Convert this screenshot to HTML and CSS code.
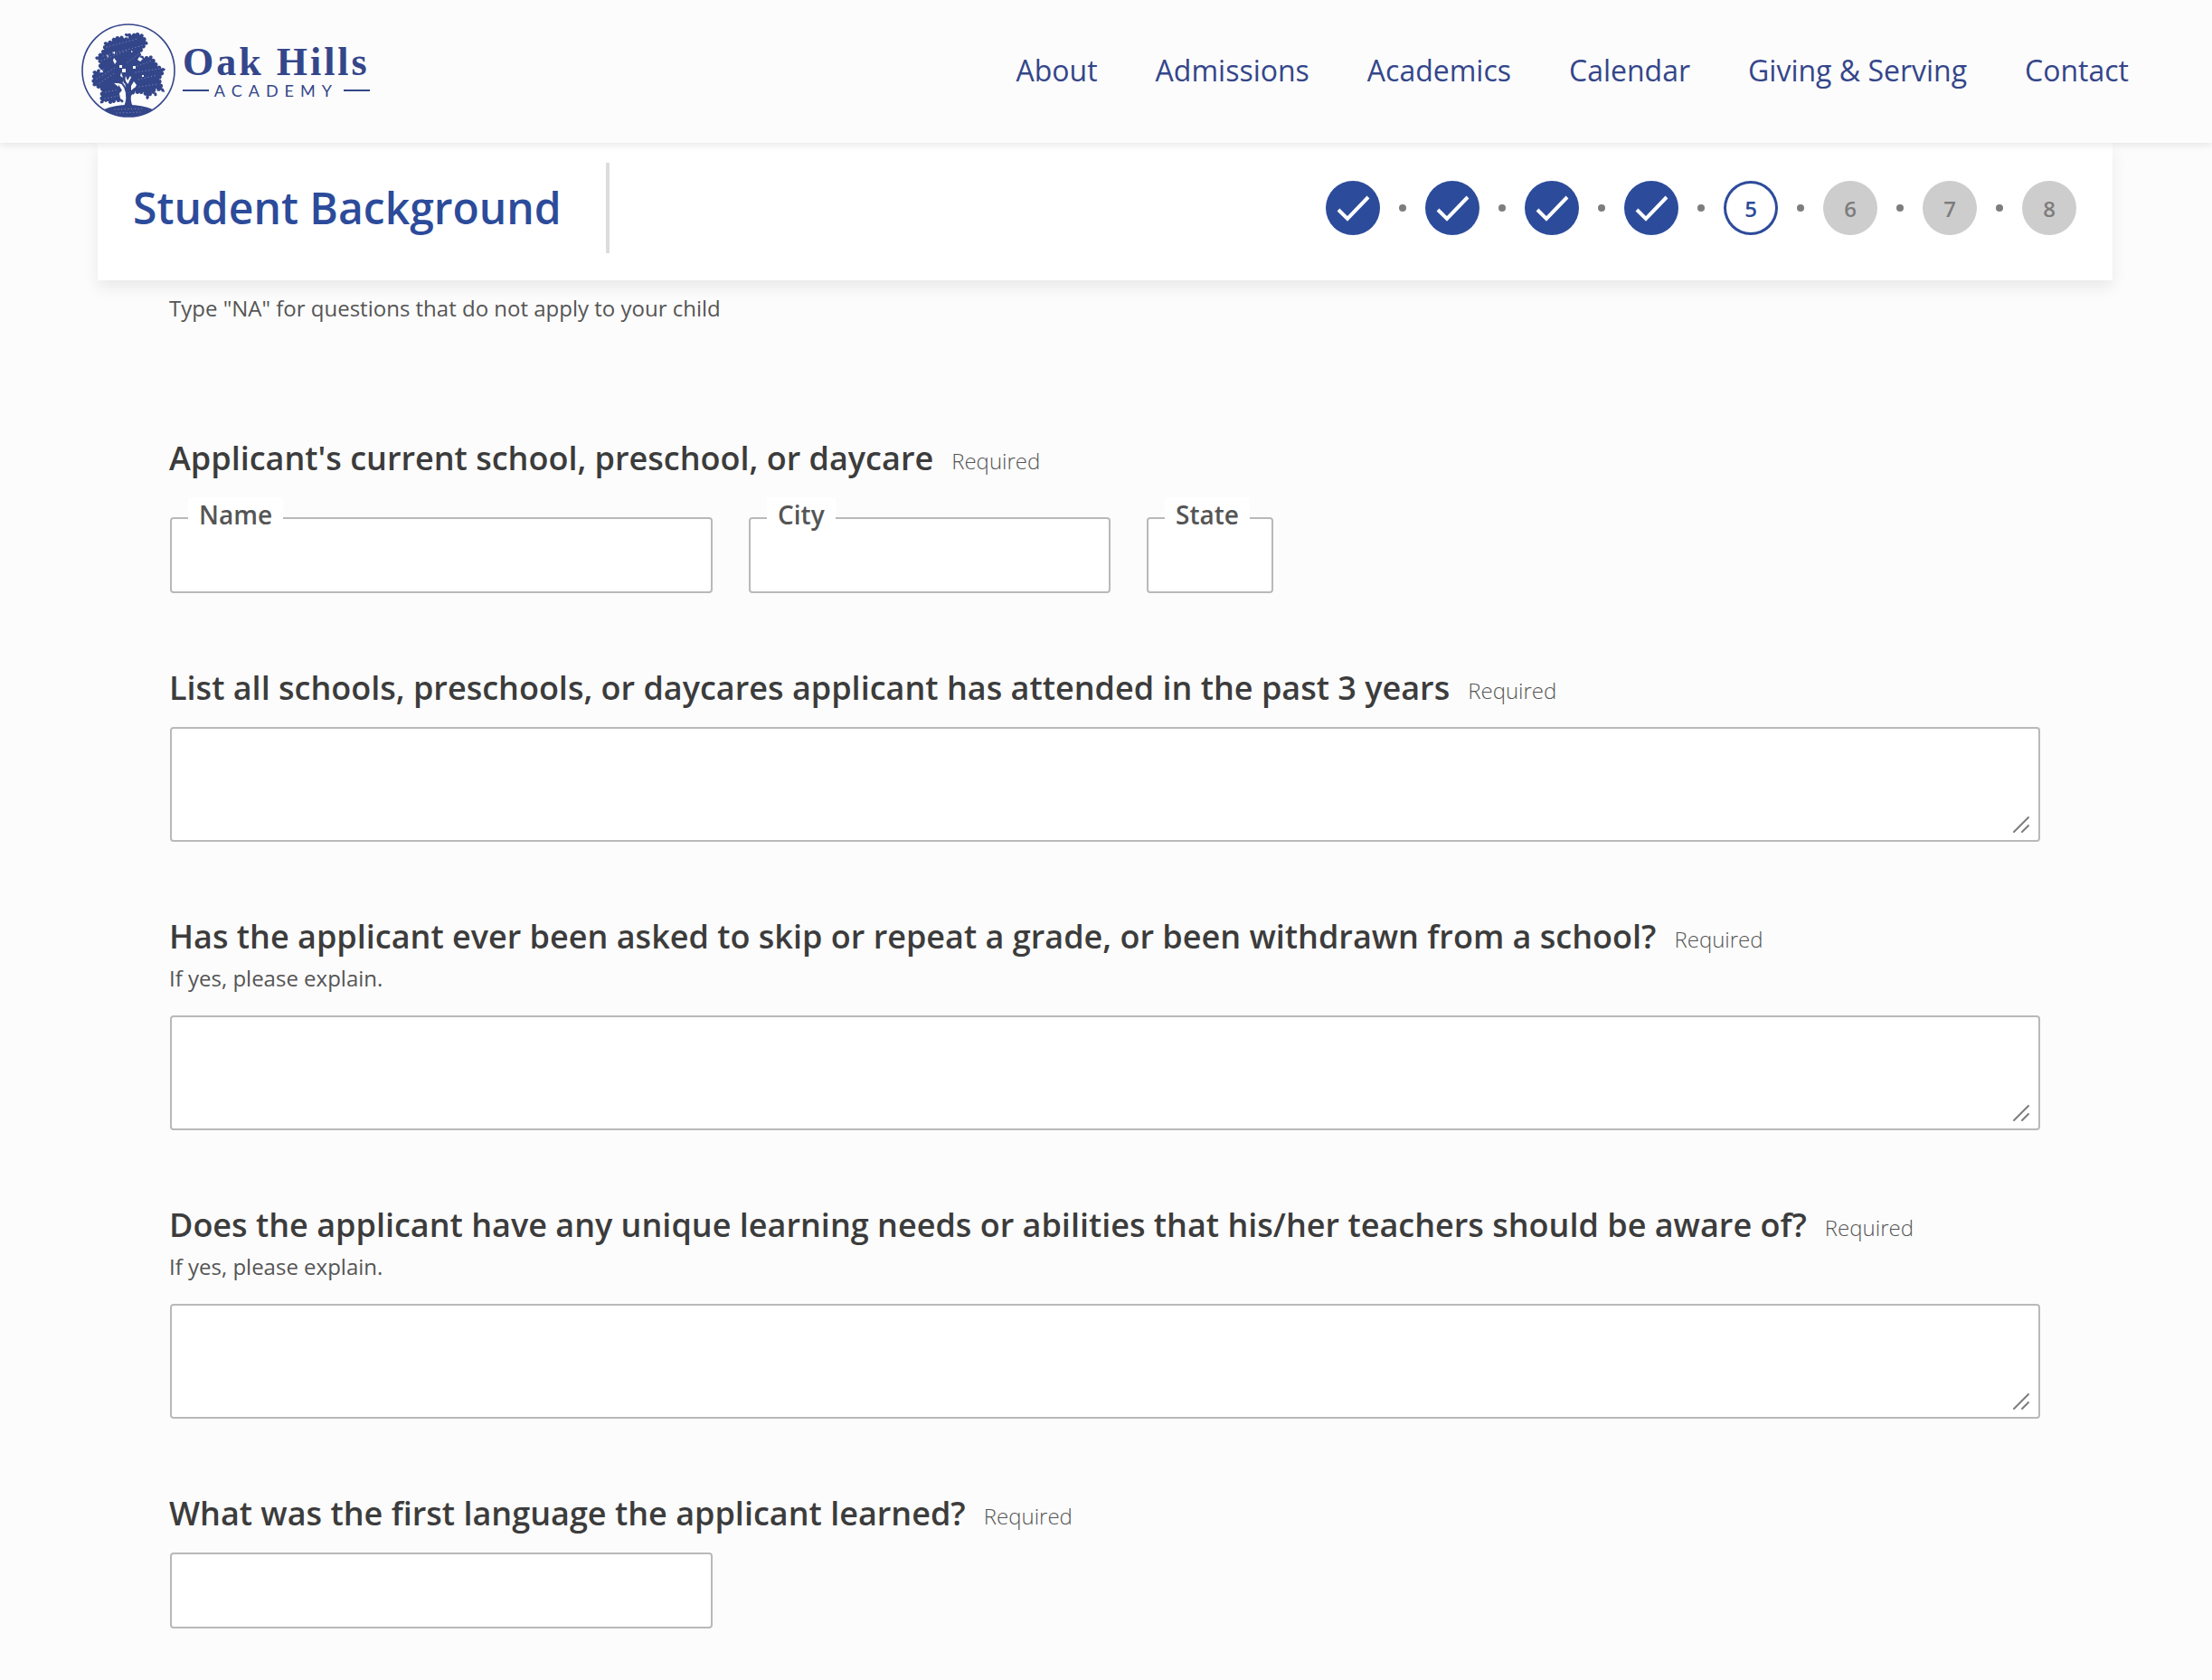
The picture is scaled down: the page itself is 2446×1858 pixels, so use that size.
FILE: index.html
```
<!DOCTYPE html>
<html lang="en">
<head>
    <meta charset="UTF-8">
    <meta name="viewport" content="width=device-width, initial-scale=1.0">
    <title>Student Background - Oak Hills Academy</title>
    <link rel="stylesheet" href="styles.css">
</head>
<body>
    <header class="site-header">
        <a class="logo" href="#">
            <svg class="logo-mark" viewBox="0 0 104 104" aria-hidden="true">
                <circle cx="52" cy="52" r="51" fill="none" stroke="#34468a" stroke-width="1.6"/>
                <!-- ground -->
                <path fill="#34468a" d="M25 95 Q37 90 52 90 Q67 90 79 95 Q67 103 52 103 Q36 103 25 95 Z"/>
                <!-- leaves -->
                <path fill="#34468a" stroke="#34468a" stroke-width="3" stroke-linecap="round" stroke-dasharray="1 4" d="M49 17 L54 16 L49 12 L57 13 L60 11 L67 13 L70 17 L72 22 L68 27 L65 32 L64 36 L69 38 L77 37 L81 42 L84 47 L91 51 L89 57 L86 61 L88 67 L90 74 L84 73 L80 70 L82 79 L78 75 L76 79 L73 82 L69 76 L63 77 L59 75 L55 79 L52 75 L50 66 L45 62 L44 67 L46 73 L42 77 L45 86 L38 85 L33 88 L28 85 L22 87 L22 79 L23 73 L18 70 L13 67 L13 61 L14 54 L19 52 L22 56 L26 51 L20 49 L21 43 L17 38 L22 33 L25 29 L26 22 L33 20 L37 16 L44 15 Z"/>
                <!-- sky between the branches -->
                <path fill="#fcfcfc" d="M40 66 l5 1 3 7 0 12 -5 -3 -1 -6 3 -3 z M44 54 l2 6 -3 -2 z M49 58 l2 5 3 -5 2 3 -4 6 -4 -3 z M55 69 l3 -5 3 4 -3 6 -3 0 z M41 70 l-5 -4 5 0 z M59 78 l9 1 -9 8 z M36 38 l3 4 -2 3 -2 -4 z M42 46 h3 v3 h-3 z M45 50 h4 v4 h-4 z M57 47 h3 v3 h-3 z M64 37 l4 2 -3 3 -3 -2 z M34 32 l3 -1 0 3 z M28 34 l2 2 -1 2 z M67 57 h2 v2 h-2 z M55 30 l2 1 -2 1 z"/>
                <!-- trunk and main branches -->
                <path fill="none" stroke="#34468a" stroke-width="2" stroke-linecap="round" d="M50 76 Q49 70 43 64 L39 58 M51 74 Q50 67 47 61 M52 76 Q51 68 56 60 M54 79 Q55 74 61 71"/>
                <path fill="#34468a" d="M48 72 Q51 83 47 92 H57 Q53 84 56 77 L59 73 Q54 74 52 77 Z"/>
                <path fill="none" stroke="#8f9ac4" stroke-width="0.8" stroke-linecap="round" stroke-dasharray="0.3 3.4" d="M28 26 L62 17 M24 36 L69 24 M22 41 L50 30 M17 61 L39 48 M20 66 L38 54 M27 76 L41 73 M26 83 L41 80 M51 43 L64 33 M62 47 L78 41 M60 54 L86 50 M63 62 L84 57 M64 70 L84 67 M37 95 L70 94 M39 99 L65 98"/>
            </svg>
            <span class="logo-text">
                <span class="logo-name">Oak Hills</span>
                <span class="logo-sub">ACADEMY</span>
            </span>
        </a>
        <nav class="main-nav">
            <a href="#">About</a>
            <a href="#">Admissions</a>
            <a href="#">Academics</a>
            <a href="#">Calendar</a>
            <a href="#">Giving &amp; Serving</a>
            <a href="#">Contact</a>
        </nav>
    </header>

    <main class="page">
        <div class="progress-bar">
            <h1>Student Background</h1>
            <ol class="steps">
                <li class="step done"><svg viewBox="0 0 60 60" role="img" aria-label="Step 1 done"><path d="M14 32 L24 42 L47 18"/></svg></li>
                <li class="step done"><svg viewBox="0 0 60 60" role="img" aria-label="Step 2 done"><path d="M14 32 L24 42 L47 18"/></svg></li>
                <li class="step done"><svg viewBox="0 0 60 60" role="img" aria-label="Step 3 done"><path d="M14 32 L24 42 L47 18"/></svg></li>
                <li class="step done"><svg viewBox="0 0 60 60" role="img" aria-label="Step 4 done"><path d="M14 32 L24 42 L47 18"/></svg></li>
                <li class="step current" aria-current="step">5</li>
                <li class="step">6</li>
                <li class="step">7</li>
                <li class="step">8</li>
            </ol>
        </div>

        <form class="application">
            <p class="intro">Type "NA" for questions that do not apply to your child</p>

            <div class="question" role="group" aria-labelledby="school-title">
                <div class="question-head">
                    <h2 id="school-title">Applicant's current school, preschool, or daycare</h2>
                    <span class="required">Required</span>
                </div>
                <div class="field-row">
                    <div class="field field-name">
                        <label for="school-name">Name</label>
                        <input type="text" id="school-name">
                    </div>
                    <div class="field field-city">
                        <label for="school-city">City</label>
                        <input type="text" id="school-city">
                    </div>
                    <div class="field field-state">
                        <label for="school-state">State</label>
                        <input type="text" id="school-state">
                    </div>
                </div>
            </div>

            <div class="question">
                <div class="question-head">
                    <label for="attended">List all schools, preschools, or daycares applicant has attended in the past 3 years</label>
                    <span class="required">Required</span>
                </div>
                <div class="textarea-wrap">
                    <textarea id="attended"></textarea>
                    <svg class="grip" viewBox="0 0 20 20" aria-hidden="true"><path d="M2 18 L18 2 M11 18 L18 11"/></svg>
                </div>
            </div>

            <div class="question">
                <div class="question-head">
                    <label for="skipped">Has the applicant ever been asked to skip or repeat a grade, or been withdrawn from a school?</label>
                    <span class="required">Required</span>
                </div>
                <p class="hint">If yes, please explain.</p>
                <div class="textarea-wrap">
                    <textarea id="skipped"></textarea>
                    <svg class="grip" viewBox="0 0 20 20" aria-hidden="true"><path d="M2 18 L18 2 M11 18 L18 11"/></svg>
                </div>
            </div>

            <div class="question">
                <div class="question-head">
                    <label for="needs">Does the applicant have any unique learning needs or abilities that his/her teachers should be aware of?</label>
                    <span class="required">Required</span>
                </div>
                <p class="hint">If yes, please explain.</p>
                <div class="textarea-wrap">
                    <textarea id="needs"></textarea>
                    <svg class="grip" viewBox="0 0 20 20" aria-hidden="true"><path d="M2 18 L18 2 M11 18 L18 11"/></svg>
                </div>
            </div>

            <div class="question">
                <div class="question-head">
                    <label for="language">What was the first language the applicant learned?</label>
                    <span class="required">Required</span>
                </div>
                <div class="field-name">
                    <input type="text" id="language">
                </div>
            </div>
        </form>
    </main>
</body>
</html>
```
FILE: styles.css
```
* {
    box-sizing: border-box;
}
body {
    font-family: "Open Sans", sans-serif;
    margin: 0;
    background: #fcfcfc;
    color: #3c3c3c;
}

/* Header */
.site-header {
    position: relative;
    z-index: 2;
    display: flex;
    justify-content: space-between;
    align-items: center;
    padding: 26px 92px 28px 90px;
    background: #fcfcfc;
    box-shadow: 0 0 10px rgba(0, 0, 0, 0.15);
}
.logo {
    display: flex;
    align-items: center;
    gap: 8px;
    color: #34468a;
    text-decoration: none;
}
.logo-mark {
    width: 104px;
    height: 104px;
}
.logo-text {
    display: flex;
    flex-direction: column;
    padding-top: 4px;
}
.logo-name {
    font-family: "Liberation Serif", serif;
    font-size: 44px;
    font-weight: bold;
    line-height: 40px;
    letter-spacing: 3px;
}
.logo-sub {
    display: flex;
    align-items: center;
    gap: 6px;
    font-family: Lato, sans-serif;
    font-size: 18px;
    line-height: 22px;
    letter-spacing: 7px;
}
.logo-sub::before,
.logo-sub::after {
    content: "";
    flex: 1;
    height: 2px;
    background: #34468a;
}
.main-nav {
    display: flex;
    gap: 64px;
}
.main-nav a {
    color: #34468a;
    font-size: 32px;
    line-height: 44px;
    text-decoration: none;
}

/* Progress bar */
.page {
    margin: 0 110px 0 108px;
}
.progress-bar {
    display: flex;
    justify-content: space-between;
    align-items: center;
    padding: 22px 40px 30px 39px;
    background: #fff;
    box-shadow: 0 8px 16px rgba(0, 0, 0, 0.08);
}
.progress-bar h1 {
    margin: 0;
    padding-right: 49px;
    border-right: 4px solid #dcdcdc;
    color: #2c4b9a;
    font-size: 48px;
    font-weight: 600;
    line-height: 100px;
}
.steps {
    display: flex;
    align-items: center;
    margin: 0;
    padding: 0;
    list-style: none;
}
.step {
    display: flex;
    align-items: center;
    justify-content: center;
    width: 60px;
    height: 60px;
    border-radius: 50%;
    background: #cdcdcd;
    color: #7d7d7d;
    font-size: 24px;
    font-weight: 600;
}
.step + .step {
    position: relative;
    margin-left: 50px;
}
.step + .step::before {
    content: "";
    position: absolute;
    left: -29px;
    width: 8px;
    height: 8px;
    border-radius: 50%;
    background: #7d7d7d;
}
.step.done {
    background: #2c4b9a;
}
.step.done svg {
    width: 60px;
    height: 60px;
    fill: none;
    stroke: #fff;
    stroke-width: 4;
}
.step.current {
    background: #fff;
    box-shadow: inset 0 0 0 3px #2c4b9a;
    color: #2c4b9a;
}

/* Form */
.application {
    padding: 15px 80px 56px 79px;
}
.intro,
.hint {
    margin: 0;
    color: #555;
    font-size: 24px;
    line-height: 32px;
}
.intro {
    margin-bottom: 125px;
}
.question {
    margin-bottom: 80px;
}
.question:last-child {
    margin-bottom: 0;
}
.question-head {
    display: flex;
    align-items: flex-end;
    gap: 20px;
    margin-bottom: 18px;
}
.question-head h2,
.question-head label {
    margin: 0;
    font-size: 36px;
    font-weight: 600;
    line-height: 50px;
}
.required {
    color: #555;
    font-size: 24px;
    font-weight: 300;
    line-height: 44px;
}
.hint {
    margin: -13px 0 25px;
}
.field-row {
    display: flex;
    gap: 40px;
}
.field-row,
.field-name,
.textarea-wrap {
    margin-left: 1px;
}
.field {
    position: relative;
    margin-left: 0;
    padding-top: 22px;
}
.field label {
    position: absolute;
    top: 0;
    left: 20px;
    padding: 0 12px;
    background: #fff;
    color: #555;
    font-size: 28px;
    font-weight: 600;
    line-height: 38px;
}
.field-name {
    width: 600px;
}
.field-city {
    width: 400px;
}
.field-state {
    width: 140px;
}
.field.field-name {
    margin-left: 0;
}
input,
textarea {
    display: block;
    width: 100%;
    border: 2px solid #b9b9b9;
    border-radius: 4px;
    background: #fff;
    color: #3c3c3c;
    font-family: inherit;
    font-size: 28px;
}
input {
    height: 84px;
    padding: 0 20px;
}
textarea {
    height: 127px;
    padding: 20px;
    resize: vertical;
}
textarea::-webkit-resizer {
    display: none;
}
.textarea-wrap {
    position: relative;
}
.grip {
    position: absolute;
    right: 11px;
    bottom: 9px;
    width: 20px;
    height: 20px;
    fill: none;
    stroke: #7d7d7d;
    stroke-width: 2;
    stroke-linecap: round;
    pointer-events: none;
}
```
